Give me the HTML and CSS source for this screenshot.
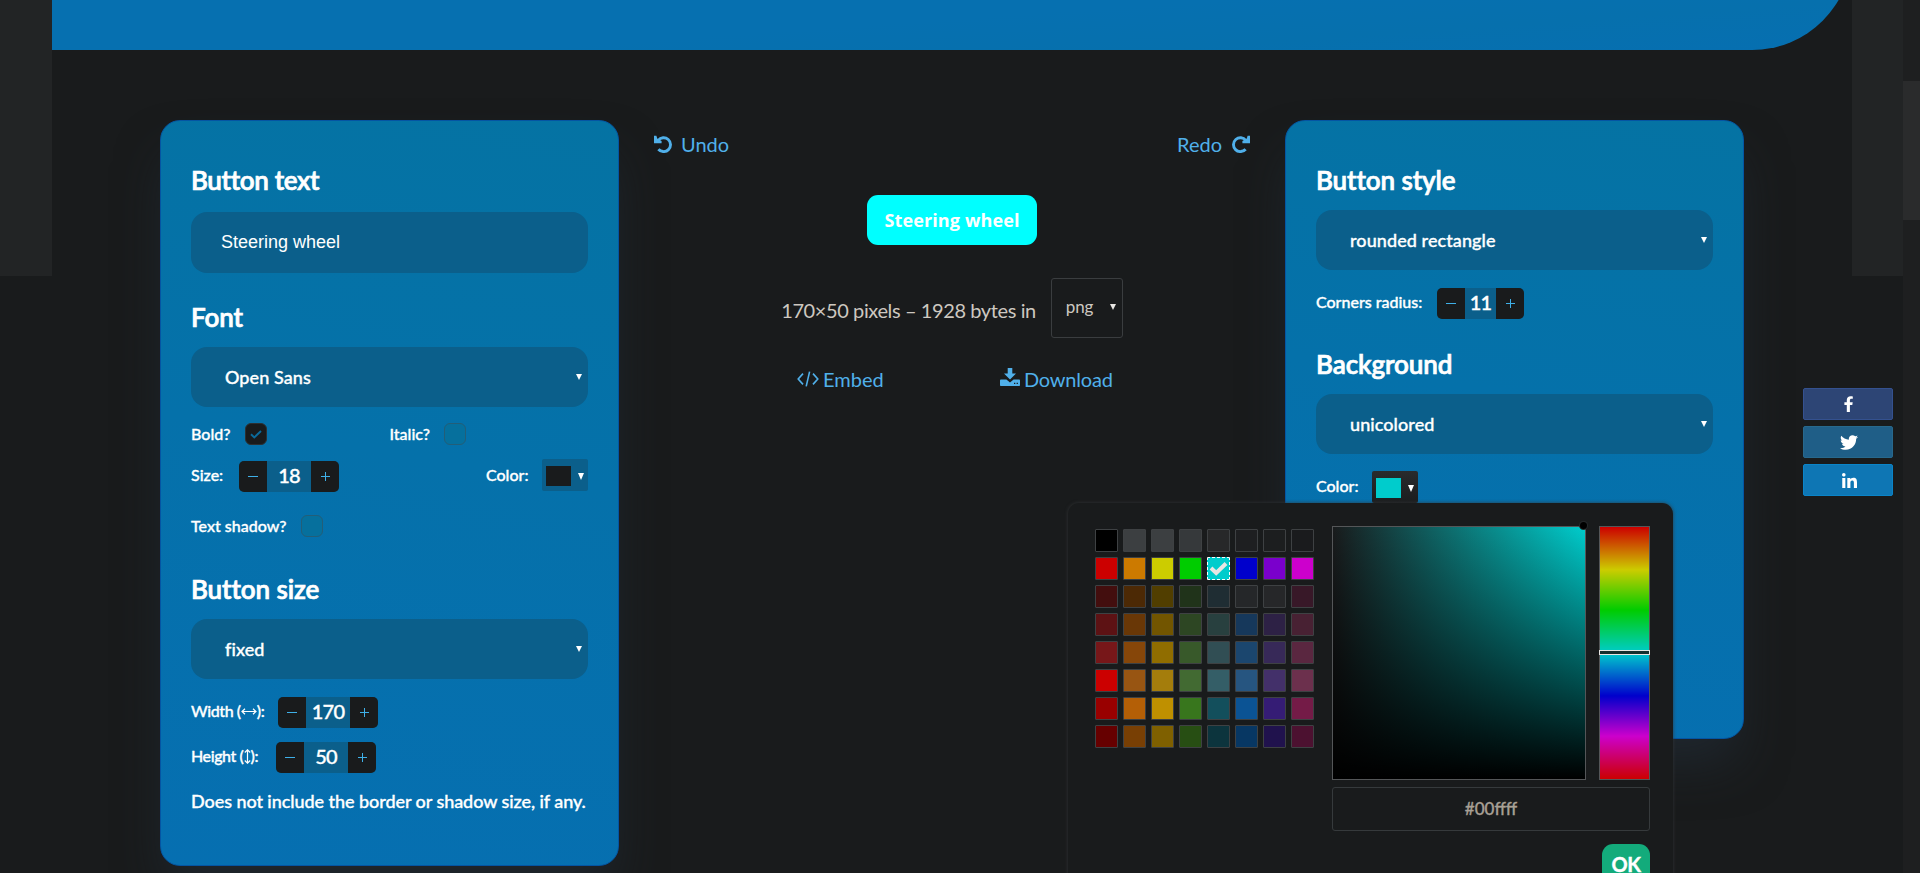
FILE: index.html
```html
<!DOCTYPE html>
<html lang="en">
<head>
<meta charset="utf-8">
<title>Button generator</title>
<link rel="stylesheet" href="styles.css">
</head>
<body>
<div class="page">
  <div class="side"></div>
  <div class="main">
    <header class="banner"></header>
    <div class="columns">
      <section class="panel panel-left">
        <h2>Button text</h2>
        <div class="field text-field">Steering wheel</div>
        <h2 class="h-font">Font</h2>
        <div class="field select">Open Sans<i class="arrow"></i></div>
        <div class="row checks">
          <div class="half"><span class="label w54">Bold?</span><span class="box checked"><svg width="12" height="9" viewBox="0 0 12 9"><path d="M1 4.2 4.3 7.4 11 1" fill="none" stroke="#0b6b9c" stroke-width="1.9"/></svg></span></div>
          <div class="half"><span class="label w54">Italic?</span><span class="box"></span></div>
        </div>
        <div class="row size-row">
          <span class="label w48">Size:</span>
          <div class="stepper"><b class="minus"></b><span>18</span><b class="plus"></b></div>
          <span class="spacer"></span>
          <span class="label w56">Color:</span>
          <div class="color-btn"><i class="chip"></i><i class="arrow big"></i></div>
        </div>
        <div class="row shadow-row"><span class="label w110">Text shadow?</span><span class="box"></span></div>
        <h2 class="h-size">Button size</h2>
        <div class="field select">fixed<i class="arrow"></i></div>
        <div class="row step-row"><span class="label w87">Width (<svg class="ico-h" width="16" height="7" viewBox="0 0 16 7"><path d="M1 3.5h14M4 .8 1 3.5l3 2.7M12 .8l3 2.7-3 2.7" fill="none" stroke="#fff" stroke-width="1.2"/></svg>):</span><div class="stepper"><b class="minus"></b><span>170</span><b class="plus"></b></div></div>
        <div class="row step-row height-row"><span class="label w85">Height (<svg class="ico-v" width="7" height="15" viewBox="0 0 7 15"><path d="M3.5 1v13M.8 3.500l2.700-2.700 2.700 2.700M.8 11.500l2.700 2.700 2.700-2.700" fill="none" stroke="#fff" stroke-width="1.2"/></svg>):</span><div class="stepper"><b class="minus"></b><span>50</span><b class="plus"></b></div></div>
        <p class="note">Does not include the border or shadow size, if any.</p>
      </section>

      <section class="preview">
        <div class="history">
          <a class="undo"><svg width="18" height="18" viewBox="0 0 18 18"><path d="M4.2 5.4A6.9 6.9 0 1 1 4.4 14.2" fill="none" stroke="#50b0ea" stroke-width="2.9"/><path d="M0 .8v7.4h7.6V6L3.2 3.6 2.4.8z" fill="#50b0ea"/></svg>Undo</a>
          <a class="redo">Redo<svg width="18" height="18" viewBox="0 0 18 18"><path d="M13.8 5.4A6.9 6.9 0 1 0 13.6 14.2" fill="none" stroke="#50b0ea" stroke-width="2.9"/><path d="M18 .8v7.4h-7.6V6l4.4-2.4.8-2.8z" fill="#50b0ea"/></svg></a>
        </div>
        <div class="sample">Steering wheel</div>
        <div class="stats"><span>170×50 pixels – 1928 bytes in</span><div class="format">png<i class="arrow"></i></div></div>
        <div class="actions">
          <a class="embed"><svg width="22" height="16" viewBox="0 0 22 16"><path d="M6 2.6 1.2 8 6 13.4M16 2.6 20.8 8 16 13.4M12.6.6 9.2 15.4" fill="none" stroke="#50b0ea" stroke-width="1.6"/></svg>Embed</a>
          <a class="download"><svg width="20" height="18" viewBox="0 0 20 18"><path d="M7.700 0h4.600v5.400H16L10 11.600 4 5.400h3.700z" fill="#50b0ea"/><path fill-rule="evenodd" d="M.8 11.600h5.600L10 14.400l3.600-2.800h5.600q.8 0 .8.8v4.800q0 .8-.8.8H.8q-.8 0-.8-.8v-4.800q0-.8.8-.8zM14 14.800v1.300h1.300v-1.300zm2.600 0v1.300h1.300v-1.300z" fill="#50b0ea"/></svg>Download</a>
        </div>
      </section>

      <section class="panel panel-right">
        <h2>Button style</h2>
        <div class="field select">rounded rectangle<i class="arrow"></i></div>
        <div class="row step-row"><span class="label w121">Corners radius:</span><div class="stepper narrow"><b class="minus"></b><span>11</span><b class="plus"></b></div></div>
        <h2 class="h-bg">Background</h2>
        <div class="field select">unicolored<i class="arrow"></i></div>
        <div class="row bg-row"><span class="label w56">Color:</span><div class="color-btn open"><i class="chip cyan"></i><i class="arrow big"></i></div></div>
      </section>
    </div>
  </div>
  <div class="side"></div>
  <div class="scrollbar"><div class="thumb"></div></div>
</div>

<div class="picker">
  <div class="palette" id="palette"></div>
  <div class="mixer">
    <div class="fields">
      <div class="shade"><i class="knob"></i></div>
      <div class="hue"><i class="slider"></i></div>
    </div>
    <div class="hex">#00ffff</div>
    <div class="ok">OK</div>
  </div>
</div>

<nav class="social">
  <a class="fb"><svg width="10" height="16" viewBox="0 0 10 16"><path d="M2.8 16V9H.4V6.2h2.4V4.1C2.8 1.6 4.300.2 6.600.2c1 0 2.200.2 2.200.2v2.400H7.500c-1.200 0-1.600.7-1.600 1.500v1.900h2.800L8.300 9H5.900v7z" fill="#fff"/></svg></a>
  <a class="tw"><svg width="18" height="15" viewBox="0 0 512 416"><path d="M459.400 103.600c.3 4.500.3 9.100.3 13.600 0 138.700-105.600 298.600-298.600 298.600-59.500 0-114.700-17.200-161.100-47.100 8.400 1 16.600 1.300 25.300 1.300 49.100 0 94.200-16.600 130.300-44.800-46.100-1-84.800-31.200-98.100-72.800 6.500 1 13 1.600 19.800 1.600 9.400 0 18.800-1.300 27.600-3.600-48.100-9.700-84.100-52-84.100-103v-1.300c14 7.800 30.200 12.700 47.400 13.300-28.300-18.800-46.800-51-46.800-87.400 0-19.500 5.200-37.400 14.300-53C87.400 82.900 165.300 124.400 252.600 129c-1.600-7.800-2.600-15.900-2.600-24C250 47 297 0 355.100 0c30.200 0 57.500 12.700 76.700 33.100 23.700-4.500 46.500-13.300 66.600-25.300-7.800 24.400-24.400 44.800-46.100 57.800 21.100-2.300 41.600-8.100 60.400-16.200-14.300 20.800-32.200 39.300-52.600 54.300z" fill="#fff"/></svg></a>
  <a class="li"><svg width="15" height="15" viewBox="0 0 448 448"><path d="M100.300 448H7.400V148.900h92.900zM53.800 108.100C24.100 108.100 0 83.500 0 53.800a53.800 53.800 0 0 1 107.600 0c0 29.700-24.100 54.300-53.800 54.300zM447.900 448h-92.700V302.400c0-34.700-.7-79.200-48.300-79.200-48.300 0-55.700 37.700-55.700 76.700V448h-92.800V148.900h89.100v40.800h1.300c12.400-23.500 42.700-48.300 87.900-48.300 94 0 111.300 61.900 111.300 142.300V448z" fill="#fff"/></svg></a>
</nav>
<script src="palette.js"></script>
</body>
</html>
```
FILE: palette.js
```js
const colors = [
  "#000000 #3c3f41 #3c3f41 #36393b #272829 #1e1f21 #1c1e1f #1a1b1d",
  "#cc0000 #cc7a00 #cccc00 #00cc00 #00cccc #0000cc #7a00cc #cc00cc",
  "#430e0e #4c2905 #513e00 #20331a #1f2d33 #252729 #262729 #381828",
  "#5d1214 #693706 #725500 #2d4623 #28403f #16385b #2d2145 #482133",
  "#771719 #864609 #906d00 #38592a #314e54 #1b466e #372958 #5a2740",
  "#cc0000 #985512 #a47d0c #426a32 #345e67 #265580 #43306a #6c304d",
  "#990000 #b45f06 #bf9000 #38761d #134f5c #0b5394 #351c75 #741b47",
  "#660000 #783f04 #7f6000 #274e13 #0c343d #073763 #20124d #4c1130"
].join(" ").split(" ");
const check = '<svg width="19" height="15" viewBox="0 0 19 15"><path d="M2 7 7.200 12 17 2.500" fill="none" stroke="#e8e6e3" stroke-width="4"/></svg>';
document.getElementById("palette").innerHTML = colors
  .map(c => `<i class="${c === "#00cccc" ? "cell picked" : "cell"}" style="background-color:${c}">${c === "#00cccc" ? check : ""}</i>`)
  .join("");
```
FILE: styles.css
```css
* { box-sizing: border-box; }
body {
  margin: 0;
  height: 873px;
  overflow: hidden;
  position: relative;
  background: #191b1c;
  color: #fff;
  font-family: Lato, "Liberation Sans", sans-serif;
}
i, b { font-style: normal; display: block; }
svg { display: block; flex: none; }

.page { display: grid; grid-template-columns: 52px 1800px 51px 17px; height: 873px; }
.side { height: 276px; background: #222425; }
.scrollbar { background: #1e1f20; padding-top: 81px; }
.thumb { height: 139px; background: #2a2b2c; }
.banner {
  height: 150px;
  margin-top: -100px;
  border-bottom-right-radius: 100px;
  background: linear-gradient(176deg, #0670b0 66%, #0670ad 82%, #066fb1 100%);
}
.columns { display: grid; grid-template-columns: 459px 666px 459px; padding: 70px 0 0 108px; align-items: start; }

.panel {
  border: 1px solid #0455a3;
  border-radius: 20px;
  padding: 42px 30px 0;
  background: linear-gradient(190deg, #0573a3 0%, #0571aa 45%, #066fb1 100%);
  box-shadow: 0 30px 50px -8px rgba(36, 50, 62, .55);
  -webkit-text-stroke: .35px #fff;
}
.panel-left { height: 746px; }
.panel-right { height: 619px; }
h2 { margin: 0 0 14px; padding-top: 1px; font-size: 26px; line-height: 32px; font-weight: 600; letter-spacing: -.1px; -webkit-text-stroke: .7px #fff; }
.panel-left h2:first-child { margin-bottom: 16px; letter-spacing: -.35px; }
.h-font { margin-top: 27px; }
.h-size { margin-top: 35px; }
.h-bg { margin-top: 28px; }

.field { border-radius: 16px; background: #0b5f8b; display: flex; align-items: center; }
.text-field { height: 61px; padding: 0 30px 1px; font: 18px "Liberation Sans", sans-serif; -webkit-text-stroke: 0; }
.select { height: 60px; padding: 0 6px 1px 34px; font-size: 18px; font-weight: 500; justify-content: space-between; letter-spacing: .08px; }
.arrow { width: 0; height: 0; border: 3px solid transparent; border-top: 6px solid #fff; border-bottom: 0; }
.arrow.big { border-width: 7px 3.5px 0; }

.row { display: flex; align-items: center; }
.label { font-size: 16px; line-height: 22px; font-weight: 500; white-space: nowrap; flex: none; }
.w48 { width: 48px; }
.w54 { width: 54px; }
.w56 { width: 56px; }
.w85 { width: 85px; }
.w87 { width: 87px; }
.w110 { width: 110px; }
.w121 { width: 121px; }
.half { width: 199px; display: flex; }
.checks { margin-top: 16px; }
.box { width: 22px; height: 22px; border: 1px solid #235e78; border-radius: 6px; background: #06709d; display: flex; align-items: center; justify-content: center; }
.box.checked { background: #191b1c; border-color: #2d3032; }
.size-row { margin-top: 14px; height: 33px; align-items: flex-start; }
.size-row .label { padding-top: 5px; }
.size-row .stepper { margin-top: 2px; }
.spacer { flex: 1; }
.shadow-row { margin-top: 23px; }
.step-row { margin-top: 18px; }
.step-row .label { padding-bottom: 3px; display: flex; align-items: center; letter-spacing: -.4px; }
.step-row .w121 { letter-spacing: 0; }
.height-row { margin-top: 14px; }

.stepper { display: flex; width: 100px; height: 31px; border-radius: 5px; overflow: hidden; background: #0b5f8b; }
.stepper.narrow { width: 87px; }
.stepper span { flex: 1; text-align: center; font-size: 20px; line-height: 28px; font-weight: 500; letter-spacing: -.8px; }
.stepper b { width: 28px; background: #191b1c; display: flex; align-items: center; justify-content: center; position: relative; }
.stepper b::before { content: ""; width: 10px; height: 1px; background: #3fb0e8; }
.stepper .plus::before { width: 9px; }
.stepper .plus::after { content: ""; position: absolute; width: 1px; height: 9px; background: #3fb0e8; }

.color-btn { width: 46px; height: 32px; border-radius: 2px; background: #0b5f8b; display: flex; align-items: center; justify-content: space-between; padding: 2px 4px 0; }
.color-btn.open { background: linear-gradient(#292b2d, #1b1d1e); }
.chip { width: 25px; height: 20px; background: #191b1c; }
.chip.cyan { background: #00cccc; }
.bg-row { margin-top: 17px; align-items: flex-start; }
.bg-row .label { padding-top: 4px; }
.note { margin: 16px 0 0; font-size: 18px; line-height: 24px; font-weight: 500; letter-spacing: -.06px; white-space: nowrap; }

.preview { padding: 9px 35px 0; font-size: 20px; line-height: 30px; color: #50b0ea; }
.history { display: flex; justify-content: space-between; }
.history a { display: flex; }
.undo svg { margin: 6px 9px 0 0; }
.redo svg { margin: 6px 0 0 10px; }
.sample {
  width: 170px;
  height: 50px;
  margin: 36px auto 0;
  border-radius: 11px;
  background: #0ff;
  color: #fff;
  font: 700 18px/50px "Open Sans", sans-serif;
  letter-spacing: .12px;
  text-align: center;
}
.stats { display: flex; justify-content: center; margin-top: 33px; color: #cdc8c0; letter-spacing: -.4px; }
.stats > span { margin-top: 17px; }
.format { width: 72px; height: 60px; margin-left: 15px; border: 1px solid #3a3d3f; border-radius: 3px; padding: 0 6px 2px 14px; display: flex; align-items: center; justify-content: space-between; font-size: 17px; letter-spacing: -.2px; }
.format .arrow { border-top-color: #e8e6e3; }
.actions { display: flex; margin: 26px 0 0 143px; }
.actions a { display: flex; }
.embed { width: 203px; }
.embed svg { margin: 7px 4px 0 0; }
.download { letter-spacing: -.2px; }
.download svg { margin: 4px 4px 0 0; }

.picker {
  position: absolute;
  left: 1068px;
  top: 503px;
  width: 605px;
  height: 400px;
  border-radius: 11px;
  padding: 23px 23px 0 27px;
  background: #191b1c;
  box-shadow: 0 0 3px 1px rgba(52, 54, 57, .55);
  display: flex;
  justify-content: space-between;
  align-items: flex-start;
}
.palette { display: grid; grid-template-columns: repeat(8, 23px); grid-auto-rows: 23px; gap: 5px; margin-top: 3px; }
.cell { border: 1px solid #3e4143; border-radius: 1px; }
.cell.picked { border: 1px dashed #fff; display: flex; align-items: center; justify-content: center; }
.mixer { width: 318px; }
.fields { display: flex; justify-content: space-between; }
.shade { position: relative; width: 254px; height: 254px; border: 1px solid #545658; background: linear-gradient(to top, #000, transparent), linear-gradient(to right, #191b1c, #00cccc); }
.knob { position: absolute; right: -2px; top: -5px; width: 7px; height: 7px; border-radius: 50%; background: #000; box-shadow: 0 0 0 1px #26292b; }
.hue { position: relative; width: 51px; height: 254px; border: 1px solid #545658; background: linear-gradient(#c00 0%, #cc0 17%, #0c0 33%, #0cc 50%, #00c 67%, #c0c 83%, #c00 100%); }
.slider { position: absolute; left: -1px; right: -1px; top: 123px; height: 5px; border: 1px solid #e8e6e3; background: #14302f; }
.hex { height: 44px; margin-top: 7px; border: 1px solid #363a3c; border-radius: 3px; text-align: center; font-size: 17px; line-height: 42px; color: #a8a095; font-weight: 500; -webkit-text-stroke: .3px #a8a095; }
.ok { width: 48px; height: 48px; margin: 13px 0 0 auto; border-radius: 11px; background: #13ab7b; font-size: 20px; font-weight: 700; line-height: 41px; text-align: center; letter-spacing: -.4px; -webkit-text-stroke: .4px #fff; }

.social { position: absolute; left: 1803px; top: 388px; display: grid; gap: 6px; }
.social a { width: 90px; height: 32px; border: 1px solid transparent; border-radius: 2px; display: flex; align-items: center; justify-content: center; padding-left: 2px; }
.social .fb { background: #2d4575; border-color: #34518f; }
.social .tw { background: #1f5e87; border-color: #27688c; }
.social .li { background: #0e76b4; border-color: #0a84c8; }
```
